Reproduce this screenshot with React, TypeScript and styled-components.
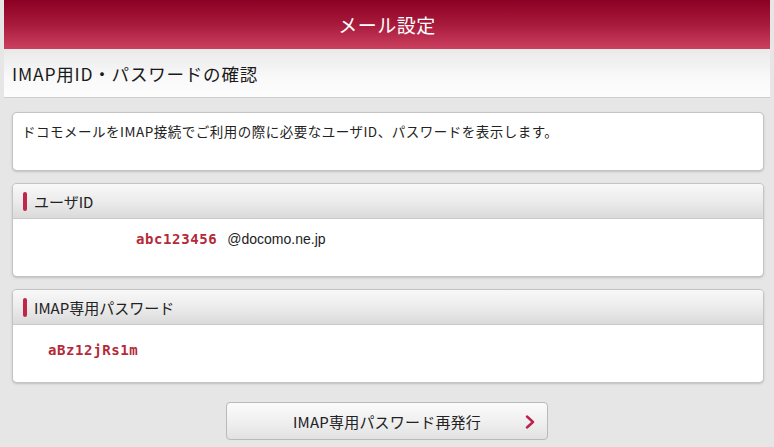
import React from "react";
import styled, { createGlobalStyle } from "styled-components";

const Global = createGlobalStyle`
  html, body { margin: 0; padding: 0; background: #e6e6e6; }
  body {
    font-family: "Noto Sans CJK JP", "Noto Sans", sans-serif;
    color: #222;
  }
`;

const Page = styled.div`
  padding: 0 4px;
  min-height: 447px;
  box-sizing: border-box;
`;

const TitleBar = styled.header`
  height: 49px;
  display: flex;
  align-items: center;
  justify-content: center;
  background: linear-gradient(to bottom, #8c0023 0%, #a81a3c 50%, #cb405f 100%);
  color: #fff;
  font-size: 19px;
  letter-spacing: 0.5px;
`;

const SubBar = styled.div`
  height: 48px;
  display: flex;
  align-items: center;
  padding-left: 8px;
  background: linear-gradient(to bottom, #e9e9e9 0%, #f9f9f9 60%, #fdfdfd 100%);
  border-bottom: 1px solid #cdcdcd;
  font-size: 17.5px;
  letter-spacing: 0.8px;
  color: #1a1a1a;
`;

const Content = styled.div`
  display: flex;
  flex-direction: column;
  gap: 14px;
  padding: 15px 7px 0 9px;
`;

const Card = styled.section`
  background: #fff;
  border-radius: 4px;
  box-shadow: 0 0 0 1px #c4c4c4, 0 1px 3px rgba(0, 0, 0, 0.35);
  overflow: hidden;
`;

const Note = styled.p`
  margin: 0;
  height: 57px;
  box-sizing: border-box;
  padding: 8px 9px 0;
  font-size: 13.5px;
  letter-spacing: 0.5px;
  line-height: 20px;
  color: #222;
`;

const CardHead = styled.div`
  height: 35px;
  display: flex;
  align-items: center;
  gap: 7px;
  padding-left: 10px;
  background: linear-gradient(to bottom, #f8f8f8 0%, #ececec 50%, #dadada 100%);
  border-bottom: 1px solid #c9c9c9;
  box-sizing: border-box;
  font-size: 15px;
  color: #222;
`;

const Mark = styled.span`
  width: 4px;
  height: 19px;
  border-radius: 2px;
  background: #be2747;
`;

const CardBody = styled.div<{ $indent: number; $top: number }>`
  height: 57px;
  box-sizing: border-box;
  display: flex;
  align-items: baseline;
  gap: 10px;
  padding: ${(p) => p.$top}px 0 0 ${(p) => p.$indent}px;
`;

const Value = styled.span`
  font-family: "DejaVu Sans Mono", "Liberation Mono", monospace;
  font-weight: bold;
  font-size: 14px;
  letter-spacing: 0.6px;
  color: #b42a3a;
`;

const Domain = styled.span`
  font-family: "Liberation Sans", Arial, sans-serif;
  font-size: 14px;
  color: #222;
`;

const ButtonRow = styled.div`
  display: flex;
  justify-content: center;
  padding: 20px 0 0;
`;

const Button = styled.button`
  position: relative;
  width: 322px;
  height: 38px;
  border: 1px solid #b9b9b9;
  border-radius: 4px;
  background: linear-gradient(to bottom, #fbfbfb 0%, #f0f0f0 50%, #e2e2e2 100%);
  font-family: "Noto Sans CJK JP", "Noto Sans", sans-serif;
  font-size: 15px;
  letter-spacing: 0.2px;
  color: #222;
  padding: 0;
  cursor: pointer;
`;

const Chevron = styled.svg`
  position: absolute;
  right: 12px;
  top: 12px;
`;

export default function App() {
  return (
    <>
      <Global />
      <Page>
        <TitleBar>メール設定</TitleBar>
        <SubBar>IMAP用ID・パスワードの確認</SubBar>
        <Content>
          <Card>
            <Note>
              ドコモメールをIMAP接続でご利用の際に必要なユーザID、パスワードを表示します。
            </Note>
          </Card>
          <Card>
            <CardHead>
              <Mark />
              ユーザID
            </CardHead>
            <CardBody $indent={123} $top={12}>
              <Value>abc123456</Value>
              <Domain>@docomo.ne.jp</Domain>
            </CardBody>
          </Card>
          <Card>
            <CardHead>
              <Mark />
              IMAP専用パスワード
            </CardHead>
            <CardBody $indent={35} $top={17}>
              <Value>aBz12jRs1m</Value>
            </CardBody>
          </Card>
        </Content>
        <ButtonRow>
          <Button>
            IMAP専用パスワード再発行
            <Chevron width="10" height="14" viewBox="0 0 10 14">
              <path d="M2 1.5 L8 7 L2 12.5" fill="none" stroke="#b8224e" strokeWidth="2.4" strokeLinecap="round" strokeLinejoin="round" />
            </Chevron>
          </Button>
        </ButtonRow>
      </Page>
    </>
  );
}
